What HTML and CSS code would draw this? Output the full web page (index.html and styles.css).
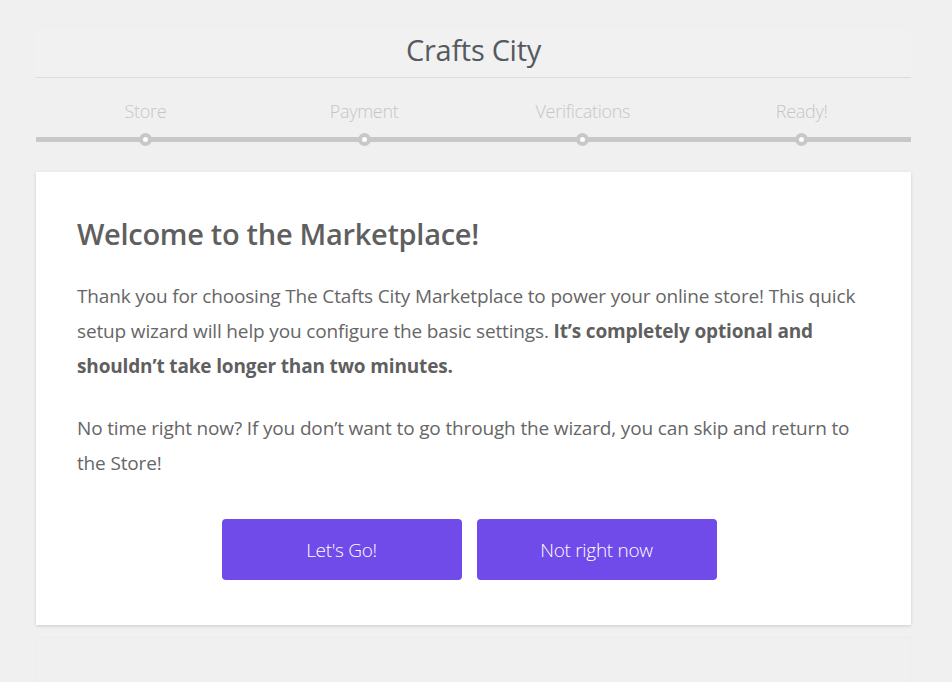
FILE: index.html
```html
<!DOCTYPE html>
<html>
<head>
<meta charset="utf-8">
<link rel="stylesheet" href="styles.css">
</head>
<body>
<div class="page">
  <div class="header">
    <h1 class="brand">Crafts City</h1>
  </div>
  <div class="steps">
    <div class="step"><span class="step-label">Store</span><span class="dot"></span></div>
    <div class="step"><span class="step-label">Payment</span><span class="dot"></span></div>
    <div class="step"><span class="step-label">Verifications</span><span class="dot"></span></div>
    <div class="step"><span class="step-label">Ready!</span><span class="dot"></span></div>
  </div>
  <div class="card">
    <h2 class="title">Welcome to the Marketplace!</h2>
    <p class="text">Thank you for choosing The Ctafts City Marketplace to power your online store! This quick setup wizard will help you configure the basic settings. <strong>It’s completely optional and shouldn’t take longer than two minutes.</strong></p>
    <p class="text">No time right now? If you don’t want to go through the wizard, you can skip and return to the Store!</p>
    <div class="actions">
      <button class="btn">Let's Go!</button>
      <button class="btn">Not right now</button>
    </div>
  </div>
  <div class="footer-panel"></div>
</div>
</body>
</html>
```
FILE: styles.css
```css
html, body {
  margin: 0;
  padding: 0;
  background: #f0f0f0;
  font-family: "Open Sans", "Noto Sans", sans-serif;
}
.page {
  width: 875px;
  padding-top: 29px;
  margin-left: 36px;
}
.header {
  background: #f1f1f1;
  border-bottom: 1px solid #dcdcdc;
  height: 49px;
  box-sizing: border-box;
  padding-bottom: 6px;
  display: flex;
  align-items: center;
  justify-content: center;
}
.brand {
  margin: 0;
  font-size: 29px;
  font-weight: 400;
  color: #555a5f;
  letter-spacing: -0.3px;
  line-height: 36px;
}
.steps {
  display: grid;
  grid-template-columns: repeat(4, 1fr);
  padding-top: 22px;
  height: 94px;
  box-sizing: border-box;
  background: linear-gradient(#c8c8c8, #c8c8c8) no-repeat 0 59px / 100% 5px;
}
.step {
  display: flex;
  flex-direction: column;
  align-items: center;
}
.step-label {
  font-size: 18px;
  font-weight: 300;
  color: #c6c6c6;
  line-height: 22px;
  letter-spacing: -0.3px;
}
.dot {
  margin-top: 11px;
  width: 5px;
  height: 5px;
  border: 4px solid #c8c8c8;
  background: #fff;
  border-radius: 50%;
}
.card {
  background: #fff;
  box-shadow: 0 1px 3px rgba(0,0,0,0.15);
  padding: 40px 40px 45px 41px;
}
.title {
  margin: 0 0 23px;
  font-size: 29px;
  font-weight: 600;
  color: #5f5f5f;
  line-height: 44px;
  letter-spacing: -0.3px;
}
.text {
  margin: 0 0 27px;
  font-size: 19px;
  line-height: 35px;
  color: #666;
  letter-spacing: -0.15px;
}
.text strong {
  font-weight: 700;
  color: #5f5f5f;
}
.actions {
  display: flex;
  justify-content: center;
  gap: 15px;
  margin-top: 38px;
  padding-right: 10px;
}
.btn {
  width: 240px;
  height: 61px;
  border: none;
  border-radius: 4px;
  background: #714aea;
  color: #fff;
  font-family: "Open Sans", "Noto Sans", sans-serif;
  font-size: 19px;
  font-weight: 300;
  letter-spacing: -0.3px;
}
.footer-panel {
  margin-top: 12px;
  height: 60px;
  background: #f0f0f0;
  border: 1px solid #ececec;
  border-bottom: none;
}
```
